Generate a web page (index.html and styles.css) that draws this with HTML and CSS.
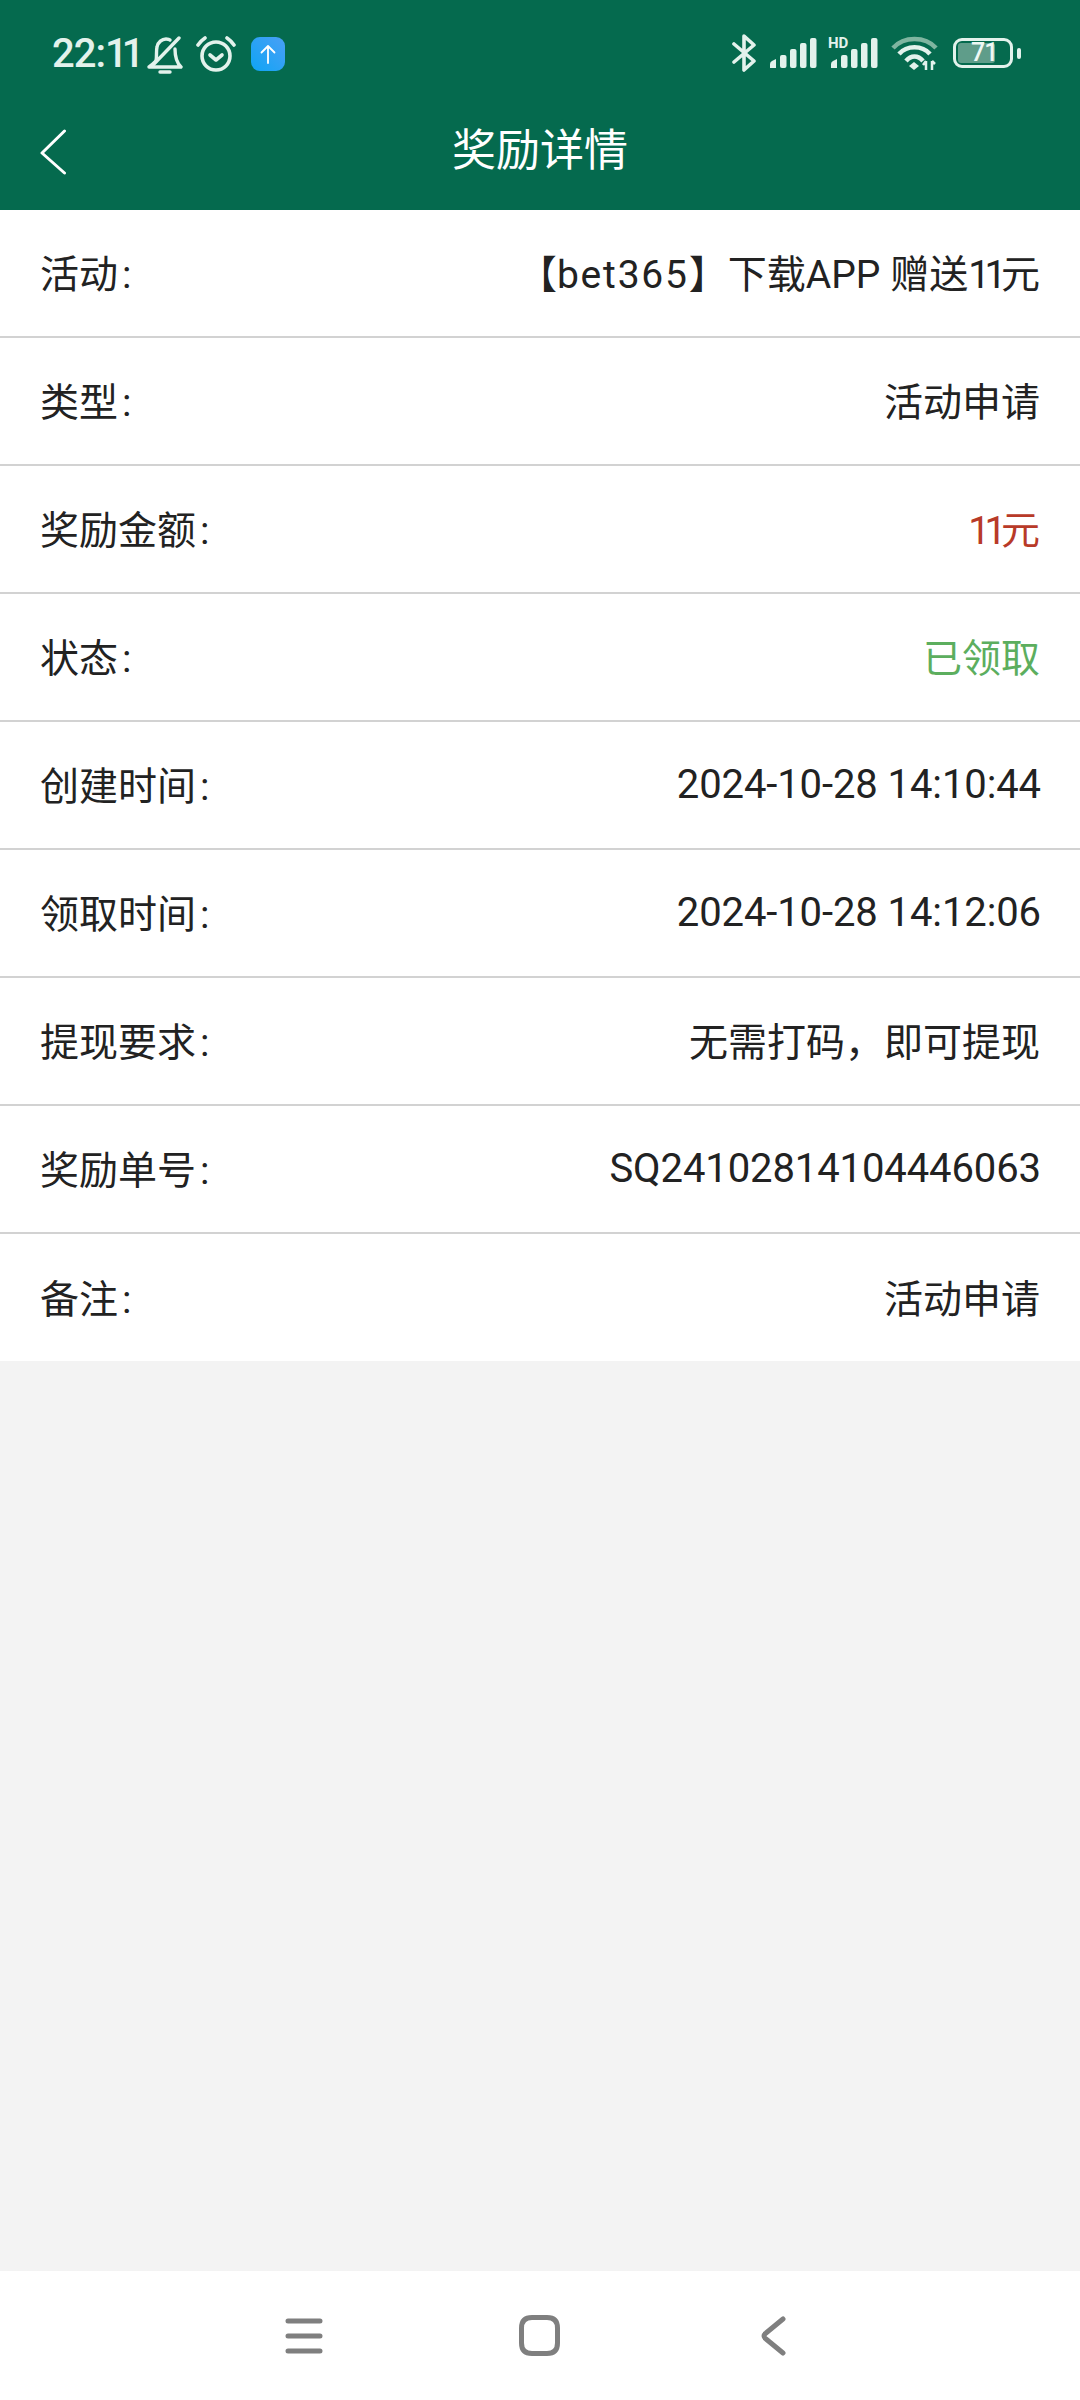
FILE: index.html
```html
<!DOCTYPE html>
<html lang="zh-CN">
<head>
<meta charset="utf-8">
<title>奖励详情</title>
<link rel="stylesheet" href="styles.css">
</head>
<body>
<div class="app">
  <header class="top">
    <div class="status">
      <div class="status-left">
        <span class="time">22:<span class="ones">11</span></span>
        <svg class="ic-bell" width="36" height="38" viewBox="0 0 36 38" fill="none" stroke="#e3f2ec" stroke-width="3.400" stroke-linecap="round" stroke-linejoin="round"><path d="M9 25 C10 20 9 15 10 11 C11 6 15 3 19 3 C20 3 22 3 23 4"/><path d="M28 13 C28 20 29 26 34 31 H2 C5 29 7 27 9 25"/><path d="M32 2 L5 30"/><path d="M13 36 H23"/></svg>
        <svg class="ic-alarm" width="40" height="36" viewBox="0 0 40 36" fill="none" stroke="#e3f2ec" stroke-width="3.600" stroke-linecap="round" stroke-linejoin="round"><circle cx="20" cy="20" r="14"/><path d="M14 19 L20 24 L26 19"/><path d="M2 9 C4 6 6 4 9 2 M31 2 C34 4 36 6 38 9"/></svg>
        <span class="app-badge"><svg width="16" height="20" viewBox="0 0 16 20" fill="none" stroke="#fff" stroke-width="1.800" stroke-linecap="round" stroke-linejoin="round"><path d="M8 19 V2 M1.500 8.500 L8 2 L14.500 8.500"/></svg></span>
      </div>
      <div class="status-right">
        <svg width="24" height="38" viewBox="0 0 24 38" fill="none" stroke="#e3f2ec" stroke-width="3.600" stroke-linecap="round" stroke-linejoin="round"><path d="M2 10 L22 27 L12 36 V2 L22 11 L2 28"/></svg>
        <svg class="sig" width="48" height="30" viewBox="0 0 48 30" fill="#e3f2ec"><path d="M1 30 V26 Q1 24 3 23 L7 21 V30 Z"/><rect x="11" y="17" width="6.500" height="13" rx="2"/><rect x="21" y="11" width="6.500" height="19" rx="2"/><rect x="31" y="5" width="6.500" height="25" rx="2"/><rect x="41" y="0" width="6.500" height="30" rx="2"/></svg>
        <div class="hd-sig">
          <span class="hd">HD</span>
          <svg width="48" height="30" viewBox="0 0 48 30" fill="#e3f2ec"><path d="M1 30 V26 Q1 24 3 23 L7 21 V30 Z"/><rect x="11" y="17" width="6.500" height="13" rx="2"/><rect x="21" y="11" width="6.500" height="19" rx="2"/><rect x="31" y="5" width="6.500" height="25" rx="2"/><rect x="41" y="0" width="6.500" height="30" rx="2"/></svg>
        </div>
        <svg class="wifi" width="47" height="36" viewBox="0 0 47 36" fill="none"><path d="M2 13 C13 1 34 1 45 13" stroke="#7fb5a0" stroke-width="4.500"/><path d="M8 19 C16 10 31 10 39 19" stroke="#e3f2ec" stroke-width="4.500"/><path d="M15 26 C20 20 27 20 32 26" stroke="#e3f2ec" stroke-width="4.500"/><path d="M18 31 L23 27 L28 31 L23 35 Z" fill="#e3f2ec"/><path d="M35 35 V26 M41 35 V26 M32 30 L35 26 M44 29 L41 26" stroke="#e3f2ec" stroke-width="2.500"/></svg>
        <div class="battery">
          <div class="batt-body"><span class="batt-fill"></span><span class="batt-num">71</span></div>
          <span class="batt-cap"></span>
        </div>
      </div>
    </div>
    <div class="bar">
      <svg class="back" width="28" height="46" viewBox="0 0 28 46" fill="none" stroke="#fff" stroke-width="3" stroke-linecap="round" stroke-linejoin="round"><path d="M25.500 2 L3 24 L25.500 44"/></svg>
      <h1 class="title">奖励详情</h1>
    </div>
  </header>
  <main class="list">
    <div class="row"><span class="label">活动<span class="colon">:</span></span><span class="value">【<span class="wide">bet365</span>】下载APP 赠送<span class="tight">11</span>元</span></div>
    <div class="row"><span class="label">类型<span class="colon">:</span></span><span class="value">活动申请</span></div>
    <div class="row"><span class="label">奖励金额<span class="colon">:</span></span><span class="value red"><span class="tight">11</span>元</span></div>
    <div class="row"><span class="label">状态<span class="colon">:</span></span><span class="value green">已领取</span></div>
    <div class="row"><span class="label">创建时间<span class="colon">:</span></span><span class="value num">2024-10-28 14:10:44</span></div>
    <div class="row"><span class="label">领取时间<span class="colon">:</span></span><span class="value num">2024-10-28 14:12:06</span></div>
    <div class="row"><span class="label">提现要求<span class="colon">:</span></span><span class="value">无需打码，即可提现</span></div>
    <div class="row"><span class="label">奖励单号<span class="colon">:</span></span><span class="value num">SQ24102814104446063</span></div>
    <div class="row"><span class="label">备注<span class="colon">:</span></span><span class="value">活动申请</span></div>
  </main>
  <div class="fill"></div>
  <nav class="nav">
    <svg width="38" height="36" viewBox="0 0 38 36" fill="none" stroke="#7f7f7f" stroke-width="5" stroke-linecap="round"><path d="M3 3 H35 M3 18 H35 M3 33 H35"/></svg>
    <svg width="41" height="41" viewBox="0 0 41 41" fill="none" stroke="#7f7f7f" stroke-width="5"><path d="M13 2.500 H28 C35 2.500 38.500 6 38.500 13 V28 C38.500 35 35 38.500 28 38.500 H13 C6 38.500 2.500 35 2.500 28 V13 C2.500 6 6 2.500 13 2.500 Z"/></svg>
    <svg class="nav-back" width="25" height="40" viewBox="0 0 25 40" fill="none" stroke="#7f7f7f" stroke-width="5" stroke-linecap="round" stroke-linejoin="round"><path d="M22 3 L5 17 Q1 20 5 23 L22 37"/></svg>
  </nav>
</div>
</body>
</html>
```
FILE: styles.css
```css
* { box-sizing: border-box; margin: 0; padding: 0; }
html, body { width: 1080px; height: 2400px; }
body { font-family: Roboto, "Noto Sans CJK SC", sans-serif; background: #f3f3f3; color: #222; }
.app { display: flex; flex-direction: column; height: 2400px; }
.top { background: #056a4e; height: 210px; flex: none; }
.status { height: 105px; padding: 34px 59px 0 52px; display: flex; justify-content: space-between; align-items: flex-start; }
.status-left { display: flex; align-items: flex-start; height: 40px; }
.time { font-size: 40px; line-height: 40px; font-weight: 500; color: #e3f2ec; width: 95px; letter-spacing: -1px; }
.ones { letter-spacing: -6px; }
.ic-bell { margin-top: 2px; }
.ic-alarm { margin: 2px 0 0 13px; }
.app-badge { width: 34px; height: 34px; border-radius: 9px; background: linear-gradient(45deg, #0ea5f5, #4a9ff5); display: flex; align-items: center; justify-content: center; margin: 3px 0 0 15px; }
.status-right { display: flex; align-items: center; height: 38px; gap: 13px; }
.hd-sig { position: relative; width: 48px; height: 30px; }
.hd { position: absolute; left: -2px; top: -1px; font-size: 15px; line-height: 13px; font-weight: 700; color: #e3f2ec; }
.hd-sig svg { display: block; }
.battery { display: flex; align-items: center; gap: 4px; margin-left: 2px; }
.batt-body { position: relative; width: 60px; height: 30px; border: 3px solid #e3f2ec; border-radius: 9px; padding: 2px; }
.batt-fill { display: block; width: 37px; height: 20px; background: #5f9d8a; border-radius: 3px; }
.batt-num { position: absolute; left: 15px; top: 1px; font-size: 25px; line-height: 22px; font-weight: 500; letter-spacing: -1px; color: #eef8f4; }
.batt-cap { width: 4px; height: 11px; background: #e3f2ec; border-radius: 2px; }
.bar { position: relative; height: 105px; display: flex; align-items: center; justify-content: center; }
.back { position: absolute; left: 39px; top: 24px; }
.title { font-size: 44px; font-weight: 400; color: #fff; line-height: 60px; margin-bottom: 14px; }
.list { background: #fff; flex: none; }
.row { height: 128px; padding: 0 40px 4px; display: flex; justify-content: space-between; align-items: center; border-bottom: 2px solid #d2d2d2; font-size: 39px; }
.row:last-child { border-bottom: 0; height: 127px; }
.colon { margin-left: 4px; }
.wide { letter-spacing: 1.800px; }
.tight { letter-spacing: -5.500px; }
.value.num { font-size: 40px; letter-spacing: -0.100px; padding-top: 2px; margin-right: -1px; }
.value.red { color: #b83a28; }
.value.green { color: #5cae5e; }
.fill { flex: 1; }
.nav { height: 129px; background: #fff; flex: none; display: flex; align-items: center; gap: 196px; padding-left: 285px; }
.nav-back { margin-left: 5px; }
```
